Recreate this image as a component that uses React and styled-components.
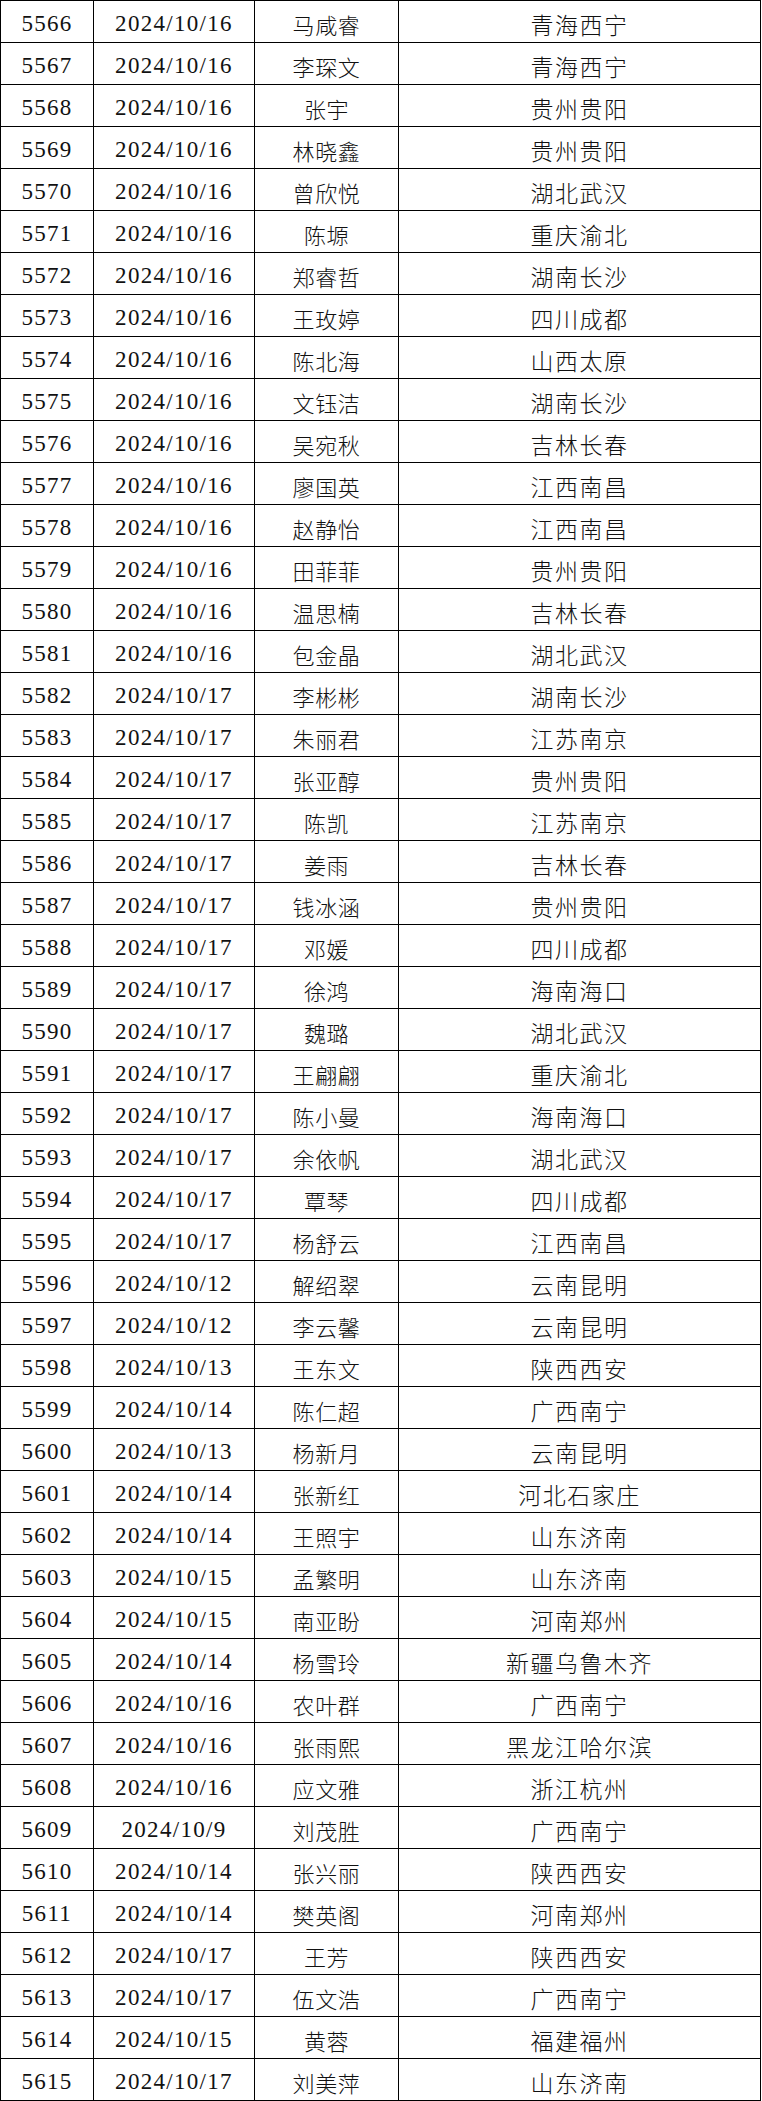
import React from 'react'
import styled, { createGlobalStyle } from 'styled-components'

const rows = [
    ['5566', '2024/10/16', '马咸睿', '青海西宁'],
    ['5567', '2024/10/16', '李琛文', '青海西宁'],
    ['5568', '2024/10/16', '张宇', '贵州贵阳'],
    ['5569', '2024/10/16', '林晓鑫', '贵州贵阳'],
    ['5570', '2024/10/16', '曾欣悦', '湖北武汉'],
    ['5571', '2024/10/16', '陈塬', '重庆渝北'],
    ['5572', '2024/10/16', '郑睿哲', '湖南长沙'],
    ['5573', '2024/10/16', '王玫婷', '四川成都'],
    ['5574', '2024/10/16', '陈北海', '山西太原'],
    ['5575', '2024/10/16', '文钰洁', '湖南长沙'],
    ['5576', '2024/10/16', '吴宛秋', '吉林长春'],
    ['5577', '2024/10/16', '廖国英', '江西南昌'],
    ['5578', '2024/10/16', '赵静怡', '江西南昌'],
    ['5579', '2024/10/16', '田菲菲', '贵州贵阳'],
    ['5580', '2024/10/16', '温思楠', '吉林长春'],
    ['5581', '2024/10/16', '包金晶', '湖北武汉'],
    ['5582', '2024/10/17', '李彬彬', '湖南长沙'],
    ['5583', '2024/10/17', '朱丽君', '江苏南京'],
    ['5584', '2024/10/17', '张亚醇', '贵州贵阳'],
    ['5585', '2024/10/17', '陈凯', '江苏南京'],
    ['5586', '2024/10/17', '姜雨', '吉林长春'],
    ['5587', '2024/10/17', '钱冰涵', '贵州贵阳'],
    ['5588', '2024/10/17', '邓媛', '四川成都'],
    ['5589', '2024/10/17', '徐鸿', '海南海口'],
    ['5590', '2024/10/17', '魏璐', '湖北武汉'],
    ['5591', '2024/10/17', '王翩翩', '重庆渝北'],
    ['5592', '2024/10/17', '陈小曼', '海南海口'],
    ['5593', '2024/10/17', '余依帆', '湖北武汉'],
    ['5594', '2024/10/17', '覃琴', '四川成都'],
    ['5595', '2024/10/17', '杨舒云', '江西南昌'],
    ['5596', '2024/10/12', '解绍翠', '云南昆明'],
    ['5597', '2024/10/12', '李云馨', '云南昆明'],
    ['5598', '2024/10/13', '王东文', '陕西西安'],
    ['5599', '2024/10/14', '陈仁超', '广西南宁'],
    ['5600', '2024/10/13', '杨新月', '云南昆明'],
    ['5601', '2024/10/14', '张新红', '河北石家庄'],
    ['5602', '2024/10/14', '王照宇', '山东济南'],
    ['5603', '2024/10/15', '孟繁明', '山东济南'],
    ['5604', '2024/10/15', '南亚盼', '河南郑州'],
    ['5605', '2024/10/14', '杨雪玲', '新疆乌鲁木齐'],
    ['5606', '2024/10/16', '农叶群', '广西南宁'],
    ['5607', '2024/10/16', '张雨熙', '黑龙江哈尔滨'],
    ['5608', '2024/10/16', '应文雅', '浙江杭州'],
    ['5609', '2024/10/9', '刘茂胜', '广西南宁'],
    ['5610', '2024/10/14', '张兴丽', '陕西西安'],
    ['5611', '2024/10/14', '樊英阁', '河南郑州'],
    ['5612', '2024/10/17', '王芳', '陕西西安'],
    ['5613', '2024/10/17', '伍文浩', '广西南宁'],
    ['5614', '2024/10/15', '黄蓉', '福建福州'],
    ['5615', '2024/10/17', '刘美萍', '山东济南'],
];

export default function App() {
    return (
        <>
            <GlobalStyle />
            <Table>
                {rows.map((row) => (
                    <React.Fragment key={row[0]}>
                        <NumberCell>{row[0]}</NumberCell>
                        <NumberCell>{row[1]}</NumberCell>
                        <TextCell>{row[2]}</TextCell>
                        <TextCell $wide>{row[3]}</TextCell>
                    </React.Fragment>
                ))}
            </Table>
        </>
    )
}

const GlobalStyle = createGlobalStyle`
    html, body {
        margin: 0;
        padding: 0;
        background: #fff;
    }
`;

const Table = styled.div`
    display: grid;
    grid-template-columns: 93px 161px 144px 362px;
    grid-auto-rows: 42px;
    width: 761px;
    box-sizing: border-box;
    border-left: 1px solid #000;
    border-top: 1px solid #000;
    color: #111;
`;

const Cell = styled.div`
    display: flex;
    align-items: center;
    justify-content: center;
    box-sizing: border-box;
    padding-top: 5px;
    border-right: 1px solid #000;
    border-bottom: 1px solid #000;
    white-space: nowrap;
`;

const NumberCell = styled(Cell)`
    font-family: "Liberation Serif", "Noto Sans CJK SC", serif;
    font-size: 23px;
    letter-spacing: 1.3px;
`;

const TextCell = styled(Cell)`
    font-family: "Noto Sans CJK SC", sans-serif;
    font-weight: 300;
    font-size: ${(p) => (p.$wide ? '23px' : '22px')};
    letter-spacing: ${(p) => (p.$wide ? '1.5px' : '0.6px')};
`;
